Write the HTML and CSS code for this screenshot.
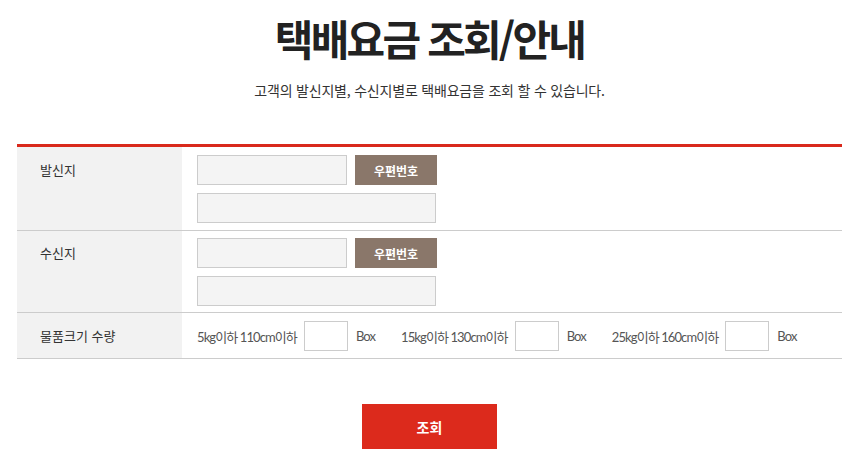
FILE: index.html
```html
<!DOCTYPE html>
<html lang="ko">
<head>
<meta charset="utf-8">
<link rel="stylesheet" href="styles.css">
</head>
<body>
<div class="page">
  <header class="head">
    <h1 class="title">택배요금 조회/안내</h1>
    <p class="sub">고객의 발신지별, 수신지별로 택배요금을 조회 할 수 있습니다.</p>
  </header>
  <div class="table">
    <div class="row">
      <div class="label">발신지</div>
      <div class="field">
        <div class="line"><input class="inp short" type="text"><button class="zip">우편번호</button></div>
        <div class="line"><input class="inp long" type="text"></div>
      </div>
    </div>
    <div class="row row-to">
      <div class="label">수신지</div>
      <div class="field">
        <div class="line"><input class="inp short" type="text"><button class="zip">우편번호</button></div>
        <div class="line"><input class="inp long" type="text"></div>
      </div>
    </div>
    <div class="row row-size">
      <div class="label">물품크기 수량</div>
      <div class="field sizes">
        <div class="size"><span class="stxt">5kg이하 110cm이하</span><input class="box" type="text"><span class="unit">Box</span></div>
        <div class="size"><span class="stxt">15kg이하 130cm이하</span><input class="box" type="text"><span class="unit">Box</span></div>
        <div class="size"><span class="stxt">25kg이하 160cm이하</span><input class="box" type="text"><span class="unit">Box</span></div>
      </div>
    </div>
  </div>
  <div class="actions"><button class="submit">조회</button></div>
</div>
</body>
</html>
```
FILE: styles.css
```css
* { box-sizing: border-box; }
body {
  margin: 0;
  font-family: "Noto Sans CJK KR", "Noto Sans", sans-serif;
  color: #333;
  background: #fff;
}
.page { padding: 0 13px 0 17px; }
.head { text-align: center; padding-top: 8px; }
.title {
  margin: 0;
  font-size: 42px;
  font-weight: 700;
  letter-spacing: -2.8px;
  line-height: 60px;
  color: #222;
}
.sub {
  margin: 12px 0 0;
  font-size: 14px;
  letter-spacing: -0.2px;
  line-height: 20px;
  color: #333;
}
.table {
  margin-top: 44px;
  border-top: 3px solid #d9291c;
}
.row {
  display: flex;
  border-bottom: 1px solid #ccc;
}
.label {
  width: 165px;
  flex: none;
  background: #f2f2f2;
  padding: 13px 0 0 23px;
  font-size: 13px;
  color: #333;
}
.field {
  flex: 1;
  padding: 8px 0 7px 15px;
  display: flex;
  flex-direction: column;
  gap: 8px;
}
.row-to .field { padding: 7px 0 6px 15px; }
.row-to .label { padding-top: 12px; }
.line { display: flex; gap: 8px; }
.inp {
  height: 30px;
  border: 1px solid #ccc;
  background: #f4f4f4;
  margin: 0;
  padding: 0;
}
.short { width: 150px; }
.long { width: 239px; }
.zip {
  width: 82px;
  height: 30px;
  border: 0;
  margin: 0;
  background: #8a776a;
  color: #fff;
  font-family: inherit;
  font-size: 12px;
  font-weight: 700;
}
.row-size .label { padding-top: 0; display: flex; align-items: center; }
.sizes {
  flex-direction: row;
  align-items: center;
  gap: 26px;
  padding: 8px 0 7px 15px;
}
.size { display: flex; align-items: center; }
.stxt, .unit {
  font-family: Lato, "Noto Sans CJK KR", sans-serif;
  font-size: 13px;
  color: #555;
  letter-spacing: -0.9px;
}
.box {
  width: 44px;
  height: 30px;
  border: 1px solid #ccc;
  background: #fff;
  margin: 0 8px 0 7px;
  padding: 0;
}
.actions { display: flex; justify-content: center; padding-top: 45px; }
.submit {
  width: 135px;
  height: 45px;
  border: 0;
  background: #dc2a1c;
  color: #fff;
  font-family: inherit;
  font-size: 14px;
  font-weight: 700;
}
```
